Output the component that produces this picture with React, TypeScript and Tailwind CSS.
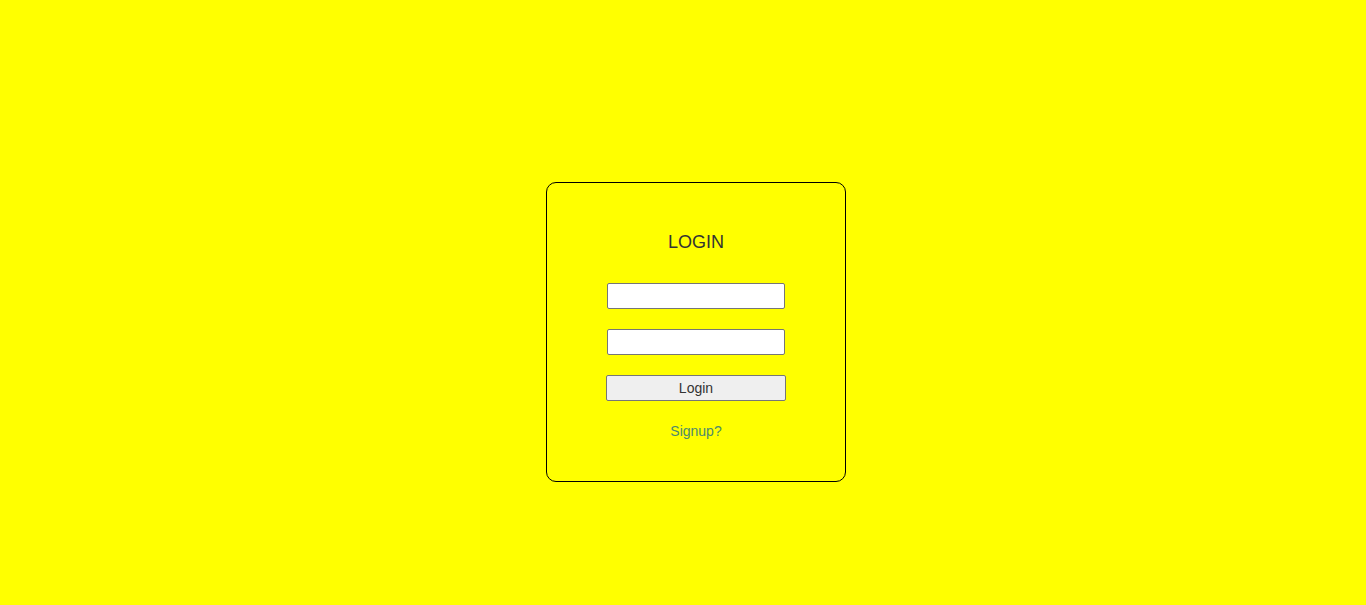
export default function App() {
  return (
    <div className="min-h-[605px] w-full bg-[#ffff00] pl-[26px] pt-[182px] font-['Liberation_Sans',Arial,sans-serif]">
      <div className="mx-auto flex h-[300px] w-[300px] flex-col items-center rounded-[10px] border border-black pt-[49px]">
        <h2 className="h-[21px] text-[18px] leading-[21px] text-[#333333]">LOGIN</h2>
        <input
          type="text"
          className="mt-[30px] h-[26px] w-[178px] rounded-[2px] border border-[#767676] bg-white px-1 text-[13px] outline-none"
        />
        <input
          type="password"
          className="mt-[20px] h-[26px] w-[178px] rounded-[2px] border border-[#767676] bg-white px-1 text-[13px] outline-none"
        />
        <button className="mt-[20px] h-[26px] w-[180px] rounded-[2px] border border-[#767676] bg-[#efefef] text-[14px] leading-[24px] text-[#333333]">
          Login
        </button>
        <a href="#" className="mt-[22px] h-[16px] text-[14px] leading-[16px] text-[#4d8a6e]">
          Signup?
        </a>
      </div>
    </div>
  );
}
